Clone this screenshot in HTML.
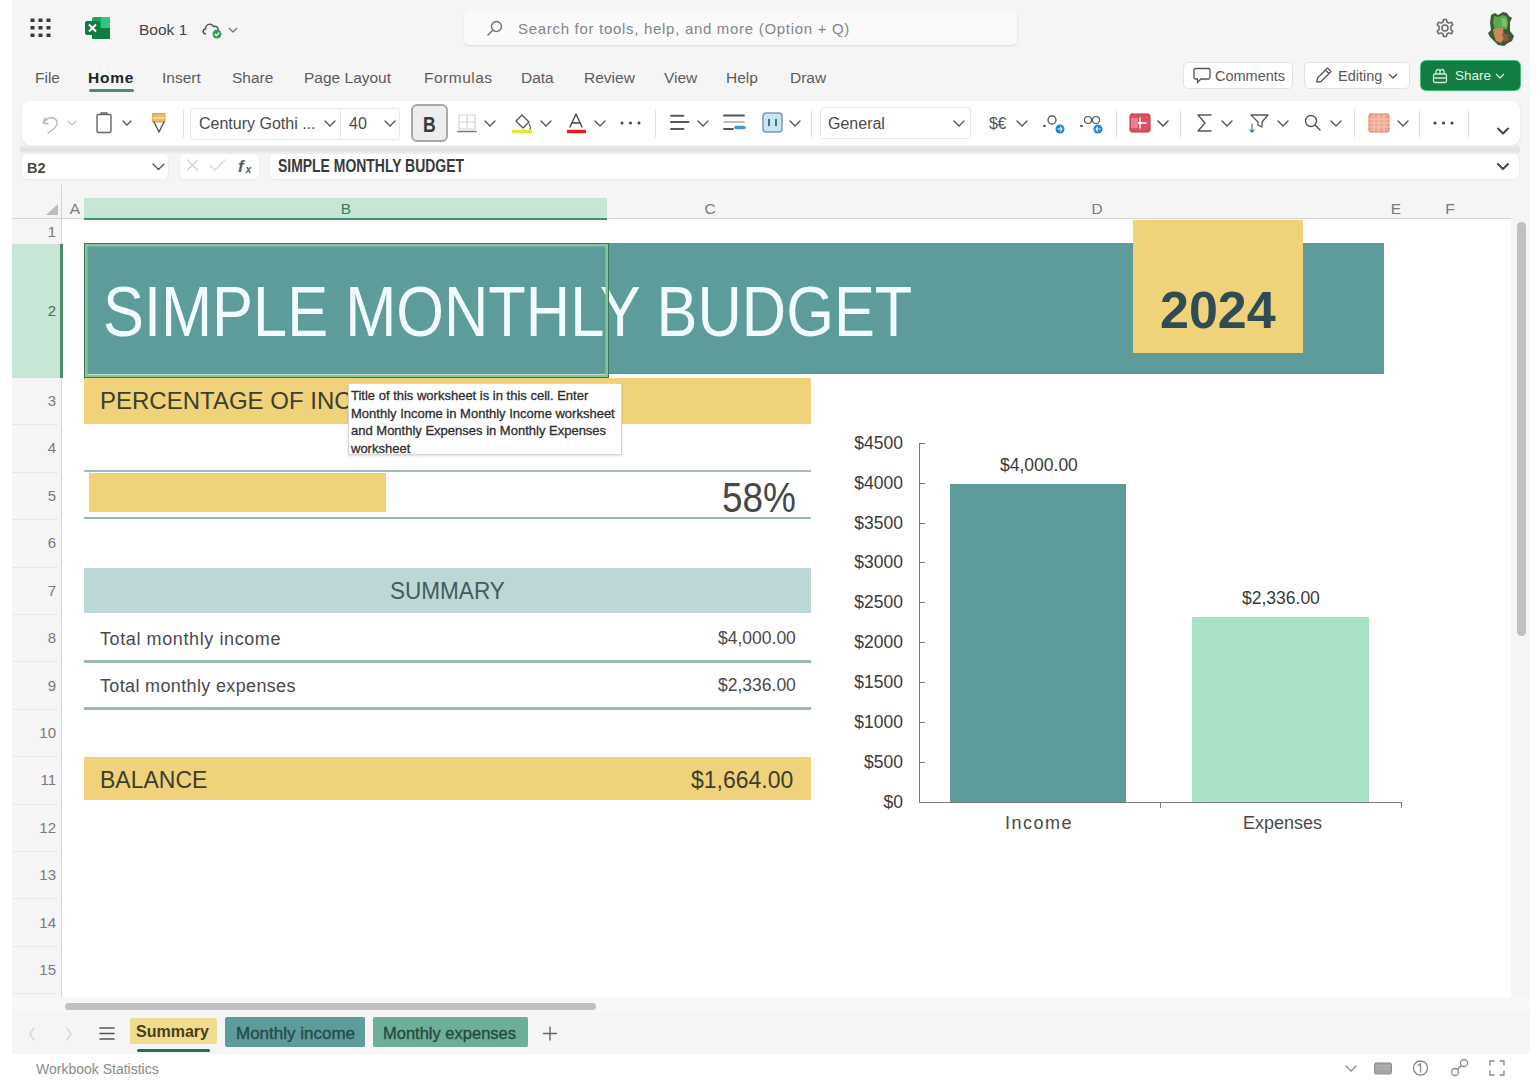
<!DOCTYPE html>
<html><head><meta charset="utf-8">
<style>
*{box-sizing:border-box;margin:0;padding:0}
html,body{width:1540px;height:1080px;overflow:hidden;background:#fff;font-family:"Liberation Sans",sans-serif;color:#242424}
.a{position:absolute}
.t{position:absolute;white-space:nowrap;line-height:1}
#app{position:absolute;left:12px;top:0;width:1518px;height:1054px;background:#f5f5f5}
.rh{position:absolute;left:12px;width:50px;text-align:right;padding-right:6px;font-size:15px;line-height:1;color:#7a7a7a}
.yl{position:absolute;left:840px;width:63px;text-align:right;font-size:17.5px;line-height:1;color:#3a3a3a}
.ch{position:absolute;top:201px;font-size:15.5px;line-height:1;color:#7a7a7a}
</style></head><body>
<div id="app"></div>


<!-- TOP BAR -->
<svg class="a" style="left:30px;top:18px" width="21" height="20" viewBox="0 0 21 20"><g fill="#383838"><rect x="0.5" y="0.5" width="4" height="3.6" rx="0.5"/><rect x="8.5" y="0.5" width="4" height="3.6" rx="0.5"/><rect x="16.5" y="0.5" width="4" height="3.6" rx="0.5"/><rect x="0.5" y="8" width="4" height="3.6" rx="0.5"/><rect x="8.5" y="8" width="4" height="3.6" rx="0.5"/><rect x="16.5" y="8" width="4" height="3.6" rx="0.5"/><rect x="0.5" y="15.5" width="4" height="3.6" rx="0.5"/><rect x="8.5" y="15.5" width="4" height="3.6" rx="0.5"/><rect x="16.5" y="15.5" width="4" height="3.6" rx="0.5"/></g></svg>
<svg class="a" style="left:85px;top:17px" width="26" height="22" viewBox="0 0 26 22">
<rect x="7" y="0" width="18" height="22" rx="2" fill="#21a366"/>
<rect x="7" y="11" width="18" height="11" rx="1" fill="#107c41"/>
<rect x="16" y="0" width="9" height="11" fill="#33c481"/>
<rect x="0" y="4" width="15" height="14" rx="2" fill="#107c41"/>
<path d="M4 7.5 L11 14.5 M11 7.5 L4 14.5" stroke="#fff" stroke-width="2"/>
</svg>
<div class="t" style="left:139px;top:22px;font-size:15.5px;color:#424242">Book 1</div>
<svg class="a" style="left:201px;top:20px" width="22" height="19" viewBox="0 0 22 19">
<path d="M5 14 C1.5 14 1 9.5 4.5 9 C4.5 4 10.5 2.5 12.5 6.5 C16 5.5 18 8.5 17 11" fill="none" stroke="#555" stroke-width="1.5"/>
<circle cx="16" cy="14" r="4.5" fill="#2e9e58"/>
<path d="M13.8 14 L15.5 15.6 L18.2 12.6" fill="none" stroke="#fff" stroke-width="1.3"/>
</svg>
<svg class="a" style="left:228px;top:27px" width="10" height="6" viewBox="0 0 10 6"><path d="M1 1 L5 5 L9 1" fill="none" stroke="#777" stroke-width="1.3"/></svg>

<div class="a" style="left:464px;top:11px;width:553px;height:34px;background:#fafafa;border-radius:5px;box-shadow:0 1px 2px rgba(0,0,0,.10)"></div>
<svg class="a" style="left:486px;top:20px" width="17" height="17" viewBox="0 0 17 17"><circle cx="10.5" cy="6.5" r="5" fill="none" stroke="#707070" stroke-width="1.4"/><path d="M7 10 L1.5 15.5" stroke="#707070" stroke-width="1.5"/></svg>
<div class="t" style="left:518px;top:21px;font-size:15px;letter-spacing:0.7px;color:#858585">Search for tools, help, and more (Option + Q)</div>

<svg class="a" style="left:1435px;top:18px" width="20" height="20" viewBox="0 0 20 20">
<path d="M8.6 1.5 H11.4 L12 4 L14 5.1 L16.4 4.2 L17.8 6.6 L15.9 8.4 V11.6 L17.8 13.4 L16.4 15.8 L14 14.9 L12 16 L11.4 18.5 H8.6 L8 16 L6 14.9 L3.6 15.8 L2.2 13.4 L4.1 11.6 V8.4 L2.2 6.6 L3.6 4.2 L6 5.1 L8 4 Z" fill="none" stroke="#6a6a6a" stroke-width="1.5" stroke-linejoin="round"/>
<circle cx="10" cy="10" r="3" fill="none" stroke="#6a6a6a" stroke-width="1.5"/></svg>
<svg class="a" style="left:1486px;top:9px" width="30" height="38" viewBox="0 0 30 38">
<path d="M5 6 L9 4 L12 6 L17 3 L21 4 L23 7 L26 9 L24 13 L24 22 L28 27 L26 32 L22 34 L18 37 L12 36 L8 32 L4 28 L2 24 L5 21 L4 14 Z" fill="#3c5a34"/>
<path d="M8 7 L12 8 L17 6 L21 8 L22 14 L21 20 L9 21 L7 14 Z" fill="#5fa84a"/>
<path d="M15 9 L20 10 L21 18 L16 17 Z" fill="#7cc25e"/>
<path d="M7 20 L17 19 L18 30 L15 34 L10 32 L8 26 Z" fill="#c98a5a"/>
<path d="M16 24 L22 25 L23 31 L18 33 Z" fill="#8f5a3c"/>
</svg>

<!-- RIBBON TABS -->
<div class="t" style="left:35px;top:70px;font-size:15.5px;color:#5c5c5c">File</div>
<div class="t" style="left:88px;top:70px;font-size:15.5px;font-weight:bold;letter-spacing:0.8px;color:#242424">Home</div>
<div class="a" style="left:89px;top:89px;width:45px;height:3px;border-radius:2px;background:#4f8a78"></div>
<div class="t" style="left:162px;top:70px;font-size:15.5px;color:#5c5c5c">Insert</div>
<div class="t" style="left:232px;top:70px;font-size:15.5px;color:#5c5c5c">Share</div>
<div class="t" style="left:304px;top:70px;font-size:15.5px;color:#5c5c5c">Page Layout</div>
<div class="t" style="left:424px;top:70px;font-size:15.5px;letter-spacing:0.5px;color:#5c5c5c">Formulas</div>
<div class="t" style="left:521px;top:70px;font-size:15.5px;color:#5c5c5c">Data</div>
<div class="t" style="left:584px;top:70px;font-size:15.5px;color:#5c5c5c">Review</div>
<div class="t" style="left:664px;top:70px;font-size:15.5px;color:#5c5c5c">View</div>
<div class="t" style="left:726px;top:70px;font-size:15.5px;color:#5c5c5c">Help</div>
<div class="t" style="left:790px;top:70px;font-size:15.5px;color:#5c5c5c">Draw</div>

<div class="a" style="left:1183px;top:62px;width:110px;height:27px;background:#fff;border:1px solid #e3e3e3;border-radius:5px"></div>
<svg class="a" style="left:1193px;top:67px" width="18" height="17" viewBox="0 0 18 17"><path d="M2.5 1.5 H15.5 A1.5 1.5 0 0 1 17 3 V10.5 A1.5 1.5 0 0 1 15.5 12 H8 L4.5 15.5 V12 H2.5 A1.5 1.5 0 0 1 1 10.5 V3 A1.5 1.5 0 0 1 2.5 1.5 Z" fill="none" stroke="#555" stroke-width="1.3"/></svg>
<div class="t" style="left:1215px;top:69px;font-size:14.5px;color:#5a5a5a">Comments</div>
<div class="a" style="left:1304px;top:62px;width:106px;height:27px;background:#fff;border:1px solid #e3e3e3;border-radius:5px"></div>
<svg class="a" style="left:1315px;top:66px" width="18" height="18" viewBox="0 0 18 18"><path d="M12.5 2 L16 5.5 L6 15.5 L1.8 16.2 L2.5 12 Z M10.5 4 L14 7.5" fill="none" stroke="#555" stroke-width="1.3" stroke-linejoin="round"/></svg>
<div class="t" style="left:1338px;top:69px;font-size:14.5px;color:#5a5a5a">Editing</div>
<svg class="a" style="left:1388px;top:73px" width="10" height="6" viewBox="0 0 10 6"><path d="M1 1 L5 5 L9 1" fill="none" stroke="#555" stroke-width="1.3"/></svg>
<div class="a" style="left:1421px;top:61px;width:99px;height:29px;background:#137c43;border-radius:5px;box-shadow:0 0 0 1px #3fbf7f"></div>
<svg class="a" style="left:1432px;top:67px" width="16" height="17" viewBox="0 0 16 17"><rect x="1.5" y="7" width="13" height="8.5" rx="1.5" fill="none" stroke="#cfe9da" stroke-width="1.3"/><path d="M4 7 V4.5 A2 2 0 0 1 8 4.5 V7 M8 4.5 A2 2 0 0 1 12 4.5 V7 M1.5 11 H14.5" fill="none" stroke="#cfe9da" stroke-width="1.3"/></svg>
<div class="t" style="left:1455px;top:69px;font-size:13.5px;color:#e2f3e8">Share</div>
<svg class="a" style="left:1495px;top:73px" width="10" height="6" viewBox="0 0 10 6"><path d="M1 1 L5 5 L9 1" fill="none" stroke="#e2f3e8" stroke-width="1.3"/></svg>

<!-- RIBBON -->
<div class="a" style="left:22px;top:101px;width:1498px;height:44px;background:#fff;border-radius:8px;box-shadow:0 1px 2px rgba(0,0,0,.10)"></div>

<!-- FORMULA BAR -->
<div class="a" style="left:20px;top:145px;width:1500px;height:9px;background:linear-gradient(#f0f0f1,#e1e1e3 45%,#e1e1e3 60%,#f3f3f3)"></div>
<div class="a" style="left:22px;top:154px;width:146px;height:25px;background:#fff;border-radius:5px;box-shadow:0 0 0 1px #ededed"></div>
<div class="a" style="left:180px;top:154px;width:79px;height:25px;background:#fff;border-radius:5px;box-shadow:0 0 0 1px #ededed"></div>
<div class="a" style="left:270px;top:154px;width:1249px;height:25px;background:#fff;border-radius:5px;box-shadow:0 0 0 1px #ededed"></div>


<!-- RIBBON CONTENT -->
<svg class="a" style="left:0;top:100px" width="1540" height="50" viewBox="0 100 1540 50">
<g fill="none" stroke-linecap="round" stroke-linejoin="round">
<!-- undo -->
<path d="M45 118 L43 123 L48 124 M43.5 123 C47 116 57 116 57 123 C57 128 52 130 48 133" stroke="#b8b8b8" stroke-width="1.4"/>
<path d="M68 121 L72 125 L76 121" stroke="#c4c4c4" stroke-width="1.3"/>
<!-- clipboard -->
<rect x="97" y="114.5" width="14" height="18" rx="1.5" stroke="#666" stroke-width="1.4"/>
<path d="M101 114.5 V113 H107 V114.5" stroke="#666" stroke-width="1.4"/>
<path d="M123 121 L127 125 L131 121" stroke="#555" stroke-width="1.4"/>
<!-- format painter -->
<path d="M153 113.5 H165 V122 H153 Z" fill="#f0b860" stroke="#e0a040" stroke-width="1"/>
<path d="M153 118 H165" stroke="#fff3d0" stroke-width="1.2"/>
<path d="M154 122 L159 132 L164 122" stroke="#555" stroke-width="1.4"/>
<!-- separator -->
<path d="M183.5 110 V137" stroke="#dedede" stroke-width="1"/>
<!-- font chevrons -->
<path d="M325 121 L330 126 L335 121" stroke="#555" stroke-width="1.4"/>
<path d="M385 121 L390 126 L395 121" stroke="#555" stroke-width="1.4"/>
<!-- borders icon -->
<path d="M459 115 H475 V129 H459 Z M467 115 V129 M459 122 H475" stroke="#cfcfcf" stroke-width="1.1"/>
<path d="M458 131.5 H476" stroke="#777" stroke-width="1.6"/>
<path d="M485 121 L490 126 L495 121" stroke="#555" stroke-width="1.4"/>
<!-- fill color -->
<path d="M516 121 L522 115 L529 122 L523 128 Z" stroke="#555" stroke-width="1.3"/>
<path d="M529 124 C531 127 531 128 530 129" stroke="#555" stroke-width="1.2"/>
<path d="M512 131.5 H532" stroke="#e8e82a" stroke-width="3.5" stroke-linecap="butt"/>
<path d="M541 121 L546 126 L551 121" stroke="#555" stroke-width="1.4"/>
<!-- font color -->
<path d="M570 127 L576 114 L582 127 M572.5 123 H579.5" stroke="#444" stroke-width="1.4"/>
<path d="M567 131.5 H586" stroke="#e81c1c" stroke-width="3.5" stroke-linecap="butt"/>
<path d="M595 121 L600 126 L605 121" stroke="#555" stroke-width="1.4"/>
<!-- more -->
<circle cx="622" cy="123" r="1.5" fill="#444" stroke="none"/><circle cx="630.5" cy="123" r="1.5" fill="#444" stroke="none"/><circle cx="639" cy="123" r="1.5" fill="#444" stroke="none"/>
<path d="M655.5 110 V137" stroke="#dedede" stroke-width="1"/>
<!-- align -->
<path d="M671 115.8 H683.5 M671 122 H688.5 M671 129 H683.5" stroke="#5a5a5a" stroke-width="2"/>
<path d="M698 121 L703 126 L708 121" stroke="#555" stroke-width="1.4"/>
<!-- wrap -->
<path d="M724 115.5 H744" stroke="#555" stroke-width="1.8"/><path d="M724 122 H744" stroke="#bdbdbd" stroke-width="1.8"/><path d="M724 129 H733" stroke="#555" stroke-width="1.8"/>
<path d="M736 127.5 H744" stroke="#3d9ad8" stroke-width="3.5"/>
<!-- merge -->
<rect x="763" y="113" width="19" height="19" rx="3" fill="#c4e6f6" stroke="#8a98a2" stroke-width="1.5"/>
<path d="M769 119.5 V125.5 M776 119.5 V125.5" stroke="#3c4a55" stroke-width="1.6"/>
<path d="M790 121 L795 126 L800 121" stroke="#555" stroke-width="1.4"/>
<path d="M811.5 110 V137" stroke="#dedede" stroke-width="1"/>
<!-- general chevron -->
<path d="M954 121 L959 126 L964 121" stroke="#555" stroke-width="1.4"/>
<!-- currency chevron -->
<path d="M1017 121 L1022 126 L1027 121" stroke="#555" stroke-width="1.4"/>
<!-- inc decimal -->
<path d="M1044 126 H1045" stroke="#555" stroke-width="2"/>
<circle cx="1052" cy="120" r="4" stroke="#555" stroke-width="1.3"/>
<circle cx="1060" cy="129" r="4.5" fill="#1e86d4" stroke="none"/>
<path d="M1058 129 H1062 M1060.5 127 L1062 129 L1060.5 131" stroke="#fff" stroke-width="1.1"/>
<!-- dec decimal -->
<path d="M1081 126 H1082" stroke="#555" stroke-width="2"/>
<circle cx="1088" cy="120" r="3.5" stroke="#555" stroke-width="1.2"/>
<circle cx="1096" cy="120" r="3.5" stroke="#555" stroke-width="1.2"/>
<circle cx="1098" cy="129" r="4.5" fill="#1e86d4" stroke="none"/>
<path d="M1096 129 H1100 M1097.5 127 L1096 129 L1097.5 131" stroke="#fff" stroke-width="1.1"/>
<path d="M1116.5 110 V137" stroke="#dedede" stroke-width="1"/>
<!-- cond format -->
<rect x="1130" y="114" width="20" height="18" rx="2" fill="#e05060" stroke="#c03040" stroke-width="1"/>
<path d="M1134 123 H1146 M1140 118 V128" stroke="#fff" stroke-width="1.5"/>
<rect x="1131" y="118" width="7" height="10" fill="#e88090" stroke="none"/>
<path d="M1158 121 L1163 126 L1168 121" stroke="#555" stroke-width="1.6"/>
<path d="M1180.5 110 V137" stroke="#dedede" stroke-width="1"/>
<!-- sigma -->
<path d="M1211 115 H1198 L1205 123 L1198 131 H1211" stroke="#555" stroke-width="1.4"/>
<path d="M1222 121 L1227 126 L1232 121" stroke="#555" stroke-width="1.4"/>
<!-- sort filter -->
<path d="M1251 115 H1268 L1262 122 V127 L1258 125 V122 Z" stroke="#555" stroke-width="1.3"/>
<path d="M1252 124 V132 M1250 130 L1252 132 L1254 130" stroke="#3a78b8" stroke-width="1.2"/>
<path d="M1278 121 L1283 126 L1288 121" stroke="#555" stroke-width="1.4"/>
<!-- find -->
<circle cx="1311" cy="121" r="5.5" stroke="#555" stroke-width="1.4"/>
<path d="M1315 125 L1320 130" stroke="#555" stroke-width="1.5"/>
<path d="M1331 121 L1336 126 L1341 121" stroke="#555" stroke-width="1.4"/>
<path d="M1354.5 110 V137" stroke="#dedede" stroke-width="1"/>
<!-- analyze -->
<rect x="1369" y="114" width="20" height="18" rx="1.5" fill="#f0a890" stroke="#e07a60" stroke-width="1"/>
<path d="M1374 114 V132 M1379 114 V132 M1384 114 V132 M1369 119 H1389 M1369 123 H1389 M1369 127 H1389" stroke="#f8d0c0" stroke-width="0.8"/>
<path d="M1398 121 L1403 126 L1408 121" stroke="#555" stroke-width="1.4"/>
<path d="M1419.5 110 V137" stroke="#dedede" stroke-width="1"/>
<circle cx="1435" cy="123" r="1.6" fill="#444" stroke="none"/><circle cx="1443.5" cy="123" r="1.6" fill="#444" stroke="none"/><circle cx="1452" cy="123" r="1.6" fill="#444" stroke="none"/>
<path d="M1468.5 110 V137" stroke="#dedede" stroke-width="1"/>
<path d="M1498 128.5 L1503 133.5 L1508 128.5" stroke="#444" stroke-width="2"/>
</g>
</svg>
<div class="a" style="left:190px;top:108px;width:151px;height:32px;border:1px solid #e6e6e6;border-radius:3px 0 0 3px"></div>
<div class="a" style="left:340px;top:108px;width:60px;height:32px;border:1px solid #e6e6e6;border-radius:0 3px 3px 0"></div>
<div class="t" style="left:199px;top:116px;font-size:16px;color:#4a4a4a">Century Gothi ...</div>
<div class="t" style="left:349px;top:116px;font-size:16px;color:#4a4a4a">40</div>
<div class="a" style="left:411px;top:104px;width:37px;height:38px;background:#ededed;border:2px solid #a8a8a8;border-radius:6px"></div>
<div class="t" style="left:423px;top:114px;font-size:22px;font-weight:bold;color:#3a3a3a;transform:scaleX(0.8);transform-origin:0 0">B</div>
<div class="a" style="left:820px;top:107px;width:151px;height:32px;border:1px solid #e6e6e6;border-radius:3px"></div>
<div class="t" style="left:828px;top:116px;font-size:16px;color:#4a4a4a">General</div>
<div class="t" style="left:989px;top:116px;font-size:16px;letter-spacing:-0.5px;color:#555">$€</div>

<!-- FORMULA BAR CONTENT -->
<div class="t" style="left:27px;top:161px;font-size:14.5px;font-weight:bold;color:#4a4a4a">B2</div>
<svg class="a" style="left:0;top:150px" width="1540" height="35" viewBox="0 150 1540 35">
<g fill="none" stroke-linecap="round" stroke-linejoin="round">
<path d="M153 164 L158.5 169.5 L164 164" stroke="#555" stroke-width="1.4"/>
<path d="M187.5 160 L197.5 170 M197.5 160 L187.5 170" stroke="#d2d2d2" stroke-width="1.3"/>
<path d="M210 165.5 L215 170 L225 160" stroke="#d8d8d8" stroke-width="1.3"/>
<path d="M1498 164 L1503 169 L1508 164" stroke="#444" stroke-width="2"/>
</g>
<text x="238" y="172" font-family="Liberation Sans" font-weight="bold" font-style="italic" font-size="17" fill="#5a5a5a">f</text>
<text x="245.5" y="173" font-family="Liberation Sans" font-weight="bold" font-style="italic" font-size="10.5" fill="#5a5a5a">x</text>
</svg>
<div class="t" style="left:278px;top:158px;font-size:17.5px;font-weight:bold;color:#3a3a3a;transform:scaleX(0.797);transform-origin:0 0">SIMPLE MONTHLY BUDGET</div>

<!-- GRID BG -->
<div class="a" style="left:62px;top:219px;width:1449px;height:778px;background:#fff"></div>
<!-- row header line -->
<div class="a" style="left:61px;top:185px;width:1px;height:812px;background:#d4d4d4"></div>
<!-- col header line -->
<div class="a" style="left:12px;top:218px;width:1499px;height:1px;background:#d4d4d4"></div>
<!-- col B highlight -->
<div class="a" style="left:84px;top:198px;width:523px;height:22px;background:linear-gradient(#c8e6d6 70%,#b8ecd4);border-bottom:2px solid #4c8a6a"></div>
<!-- row 2 highlight -->
<div class="a" style="left:12px;top:244px;width:51px;height:134px;background:#c6e7d6;border-right:3px solid #4e8b6b"></div>

<div class="ch" style="left:75px;width:40px;text-align:center;margin-left:-20px">A</div>
<div class="ch" style="left:346px;width:40px;text-align:center;margin-left:-20px;color:#3d7a5c">B</div>
<div class="ch" style="left:710px;width:40px;text-align:center;margin-left:-20px">C</div>
<div class="ch" style="left:1097px;width:40px;text-align:center;margin-left:-20px">D</div>
<div class="ch" style="left:1396px;width:40px;text-align:center;margin-left:-20px">E</div>
<div class="ch" style="left:1450px;width:40px;text-align:center;margin-left:-20px">F</div>

<div class="a" style="left:12px;top:424px;width:46px;height:1px;background:#e6e6e6"></div><div class="a" style="left:12px;top:472px;width:46px;height:1px;background:#e6e6e6"></div><div class="a" style="left:12px;top:519px;width:46px;height:1px;background:#e6e6e6"></div><div class="a" style="left:12px;top:567px;width:46px;height:1px;background:#e6e6e6"></div><div class="a" style="left:12px;top:614px;width:46px;height:1px;background:#e6e6e6"></div><div class="a" style="left:12px;top:661px;width:46px;height:1px;background:#e6e6e6"></div><div class="a" style="left:12px;top:709px;width:46px;height:1px;background:#e6e6e6"></div><div class="a" style="left:12px;top:756px;width:46px;height:1px;background:#e6e6e6"></div><div class="a" style="left:12px;top:804px;width:46px;height:1px;background:#e6e6e6"></div><div class="a" style="left:12px;top:851px;width:46px;height:1px;background:#e6e6e6"></div><div class="a" style="left:12px;top:898px;width:46px;height:1px;background:#e6e6e6"></div><div class="a" style="left:12px;top:946px;width:46px;height:1px;background:#e6e6e6"></div><div class="a" style="left:12px;top:993px;width:46px;height:1px;background:#e6e6e6"></div>
<div class="rh" style="top:224px">1</div>
<div class="rh" style="top:303px;color:#4a6a5a">2</div>
<div class="rh" style="top:393px">3</div>
<div class="rh" style="top:440px">4</div>
<div class="rh" style="top:488px">5</div>
<div class="rh" style="top:535px">6</div>
<div class="rh" style="top:583px">7</div>
<div class="rh" style="top:630px">8</div>
<div class="rh" style="top:678px">9</div>
<div class="rh" style="top:725px">10</div>
<div class="rh" style="top:772px">11</div>
<div class="rh" style="top:820px">12</div>
<div class="rh" style="top:867px">13</div>
<div class="rh" style="top:915px">14</div>
<div class="rh" style="top:962px">15</div>

<!-- TITLE -->
<div class="a" style="left:84px;top:243px;width:1300px;height:131px;background:#5e9b9b"></div>
<div class="t" style="left:103px;top:278px;font-size:69.5px;color:#f2fbfd;transform:scaleX(0.883);transform-origin:0 0">SIMPLE MONTHLY BUDGET</div>
<div class="a" style="left:1133px;top:220px;width:170px;height:133px;background:#efd27a"></div>
<div class="t" style="left:1160px;top:284px;font-size:52px;font-weight:bold;color:#2f4b53">2024</div>

<div class="a" style="left:84px;top:243px;width:525px;height:135px;border:1.5px solid #3a7757;box-shadow:inset 0 0 0 2.5px #86c4a0"></div>
<!-- ROW 3 -->
<div class="a" style="left:84px;top:378px;width:727px;height:46px;background:#efd27a"></div>
<div class="t" style="left:100px;top:389px;font-size:24px;color:#3e3e30">PERCENTAGE OF INCO</div>

<!-- tooltip -->
<div class="a" style="left:348px;top:383px;width:274px;height:72px;background:#fff;border:1px solid #d6d6d6;box-shadow:0 1px 2px rgba(0,0,0,.15)"></div>
<div class="t" style="left:351px;top:387px;font-size:13px;line-height:17.5px;color:#2e2e2e;-webkit-text-stroke:0.3px #2e2e2e;white-space:pre">Title of this worksheet is in this cell. Enter
Monthly Income in Monthly Income worksheet
and Monthly Expenses in Monthly Expenses
worksheet</div>

<!-- ROW 5 -->
<div class="a" style="left:84px;top:470px;width:727px;height:2px;background:#a9bbb8"></div>
<div class="a" style="left:84px;top:517px;width:727px;height:2px;background:#96b6ae"></div>
<div class="a" style="left:89px;top:473px;width:297px;height:39px;background:#efd27a"></div>
<div class="t" style="left:722px;top:477px;font-size:42px;color:#474747;transform:scaleX(0.88);transform-origin:0 0">58%</div>

<!-- SUMMARY -->
<div class="a" style="left:84px;top:568px;width:727px;height:45px;background:#bcd7d5"></div>
<div class="t" style="left:390px;top:580px;font-size:23px;transform:scaleX(0.98);transform-origin:0 0;color:#3f5d5d">SUMMARY</div>

<div class="t" style="left:100px;top:630px;font-size:18px;letter-spacing:0.6px;color:#4a4a4a">Total monthly income</div>
<div class="t" style="left:718px;top:630px;font-size:17.5px;color:#4a4a4a">$4,000.00</div>
<div class="a" style="left:84px;top:660px;width:727px;height:3px;background:#9ebaaf"></div>
<div class="t" style="left:100px;top:677px;font-size:18px;letter-spacing:0.35px;color:#4a4a4a">Total monthly expenses</div>
<div class="t" style="left:718px;top:677px;font-size:17.5px;color:#4a4a4a">$2,336.00</div>
<div class="a" style="left:84px;top:707px;width:727px;height:3px;background:#9ebaaf"></div>

<!-- BALANCE -->
<div class="a" style="left:84px;top:757px;width:727px;height:43px;background:#efd27a"></div>
<div class="t" style="left:100px;top:769px;font-size:23px;color:#3e3e30">BALANCE</div>
<div class="t" style="left:691px;top:769px;font-size:23px;color:#3e3e30">$1,664.00</div>

<!-- CHART -->
<div class="a" style="left:919px;top:443px;width:1px;height:360px;background:#7a7a7a"></div>
<div class="a" style="left:919px;top:802px;width:483px;height:1px;background:#7a7a7a"></div>
<div class="a" style="left:950px;top:484px;width:176px;height:318px;background:#5e9b9b"></div>
<div class="a" style="left:1192px;top:617px;width:177px;height:185px;background:#a8e1c4"></div>


<!-- chart labels -->
<div class="a" style="left:919px;top:443px;width:6px;height:1px;background:#7a7a7a"></div>
<div class="a" style="left:919px;top:483px;width:6px;height:1px;background:#7a7a7a"></div>
<div class="a" style="left:919px;top:523px;width:6px;height:1px;background:#7a7a7a"></div>
<div class="a" style="left:919px;top:562px;width:6px;height:1px;background:#7a7a7a"></div>
<div class="a" style="left:919px;top:602px;width:6px;height:1px;background:#7a7a7a"></div>
<div class="a" style="left:919px;top:642px;width:6px;height:1px;background:#7a7a7a"></div>
<div class="a" style="left:919px;top:682px;width:6px;height:1px;background:#7a7a7a"></div>
<div class="a" style="left:919px;top:722px;width:6px;height:1px;background:#7a7a7a"></div>
<div class="a" style="left:919px;top:762px;width:6px;height:1px;background:#7a7a7a"></div>
<div class="a" style="left:1160px;top:802px;width:1px;height:6px;background:#7a7a7a"></div>
<div class="a" style="left:1401px;top:802px;width:1px;height:6px;background:#7a7a7a"></div>
<div class="yl" style="top:435px">$4500</div>
<div class="yl" style="top:475px">$4000</div>
<div class="yl" style="top:515px">$3500</div>
<div class="yl" style="top:554px">$3000</div>
<div class="yl" style="top:594px">$2500</div>
<div class="yl" style="top:634px">$2000</div>
<div class="yl" style="top:674px">$1500</div>
<div class="yl" style="top:714px">$1000</div>
<div class="yl" style="top:754px">$500</div>
<div class="yl" style="top:794px">$0</div>
<div class="t" style="left:1000px;top:457px;font-size:17.5px;color:#3a3a3a">$4,000.00</div>
<div class="t" style="left:1242px;top:590px;font-size:17.5px;color:#3a3a3a">$2,336.00</div>
<div class="t" style="left:1005px;top:814px;font-size:18px;letter-spacing:1.5px;color:#4a4a4a">Income</div>
<div class="t" style="left:1243px;top:814px;font-size:18px;color:#4a4a4a">Expenses</div>

<div class="a" style="left:12px;top:997px;width:1518px;height:16px;background:#f7f7f7"></div>
<!-- scrollbars -->
<div class="a" style="left:1517px;top:222px;width:9px;height:414px;background:#c1bfc1;border-radius:5px"></div>
<div class="a" style="left:65px;top:1003px;width:531px;height:7px;background:#c1bfc1;border-radius:4px"></div>


<!-- select all -->
<svg class="a" style="left:45px;top:204px" width="14" height="12" viewBox="0 0 14 12"><path d="M13 0 V11 H1 Z" fill="#bdbdbd"/></svg>

<!-- SHEET TABS -->
<div class="a" style="left:12px;top:1054px;width:1528px;height:26px;background:#fff"></div>
<svg class="a" style="left:0;top:1015px" width="600" height="40" viewBox="0 1015 600 40">
<g fill="none" stroke-linecap="round" stroke-linejoin="round">
<path d="M34 1028 L30 1034 L34 1040" stroke="#d0d0d0" stroke-width="1.3"/>
<path d="M67 1028 L71 1034 L67 1040" stroke="#d0d0d0" stroke-width="1.3"/>
<path d="M100 1028 H114 M100 1033.5 H114 M100 1039 H114" stroke="#555" stroke-width="1.5"/>
<path d="M550 1027 V1040 M543.5 1033.5 H556.5" stroke="#666" stroke-width="1.4"/>
</g></svg>
<div class="a" style="left:130px;top:1018px;width:87px;height:26px;background:#f0dc8e;border-radius:2px"></div>
<div class="t" style="left:136px;top:1024px;font-size:16px;font-weight:bold;color:#4b3d1c">Summary</div>
<div class="a" style="left:137px;top:1049px;width:73px;height:3px;border-radius:2px;background:#22704f"></div>
<div class="a" style="left:225px;top:1017px;width:140px;height:30px;background:#5e9b9b;border-radius:2px"></div>
<div class="t" style="left:236px;top:1025px;font-size:17px;color:#234a4b;-webkit-text-stroke:0.35px #234a4b">Monthly income</div>
<div class="a" style="left:373px;top:1017px;width:155px;height:30px;background:#6dae99;border-radius:2px"></div>
<div class="t" style="left:383px;top:1025px;font-size:16.5px;color:#244a3e;-webkit-text-stroke:0.35px #244a3e">Monthly expenses</div>

<!-- STATUS BAR -->
<div class="t" style="left:36px;top:1062px;font-size:14px;color:#8a8a8a">Workbook Statistics</div>
<svg class="a" style="left:1340px;top:1058px" width="180" height="22" viewBox="1340 1058 180 22">
<g fill="none" stroke-linecap="round" stroke-linejoin="round">
<path d="M1346 1066 L1351 1071 L1356 1066" stroke="#8c8c8c" stroke-width="1.4"/>
<rect x="1374.5" y="1063" width="17" height="11" rx="1.5" fill="#a5a5a5" stroke="#8c8c8c" stroke-width="1"/>
<path d="M1377 1066 H1389 M1377 1069 H1389" stroke="#bbb" stroke-width="0.8"/>
<circle cx="1420.5" cy="1068" r="7" stroke="#8c8c8c" stroke-width="1.4"/>
<path d="M1420.5 1064 V1072 M1418 1065.5 L1420.5 1064" stroke="#8c8c8c" stroke-width="1.4"/>
<circle cx="1455" cy="1072" r="3.5" stroke="#8c8c8c" stroke-width="1.3"/>
<circle cx="1464" cy="1063" r="3.5" stroke="#8c8c8c" stroke-width="1.3"/>
<path d="M1457.5 1069.5 L1461.5 1065.5" stroke="#8c8c8c" stroke-width="1.3"/>
<path d="M1490 1065 V1061 H1494 M1500 1061 H1504 V1065 M1504 1071 V1075 H1500 M1494 1075 H1490 V1071" stroke="#8c8c8c" stroke-width="1.4"/>
</g></svg>

</body></html>
